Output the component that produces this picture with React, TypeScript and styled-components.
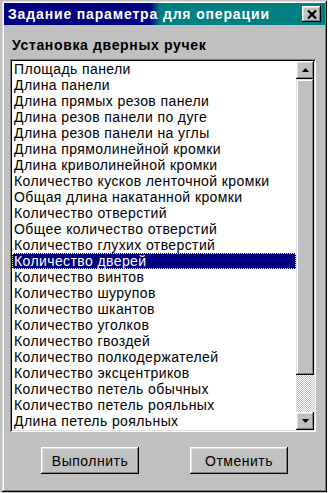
import React from 'react';
import styled, {createGlobalStyle} from 'styled-components';

const items = [
  'Площадь панели',
  'Длина панели',
  'Длина прямых резов панели',
  'Длина резов панели по дуге',
  'Длина резов панели на углы',
  'Длина прямолинейной кромки',
  'Длина криволинейной кромки',
  'Количество кусков ленточной кромки',
  'Общая длина накатанной кромки',
  'Количество отверстий',
  'Общее количество отверстий',
  'Количество глухих отверстий',
  'Количество дверей',
  'Количество винтов',
  'Количество шурупов',
  'Количество шкантов',
  'Количество уголков',
  'Количество гвоздей',
  'Количество полкодержателей',
  'Количество эксцентриков',
  'Количество петель обычных',
  'Количество петель рояльных',
  'Длина петель рояльных',
];

const SELECTED = 12;

const GlobalStyle = createGlobalStyle`
  html, body {
    margin: 0;
    padding: 0;
  }
  body {
    background: linear-gradient(to right, #c0c0c0 327px, #ffffff 327px);
    font-family: "Liberation Sans", Arial, sans-serif;
  }
`;

const Desktop = styled.div`
  padding: 1px 0 0 2px;
  height: 493px;
  box-sizing: border-box;
`;

const Window = styled.div`
  width: 325px;
  height: 491px;
  box-sizing: border-box;
  padding: 2px;
  background: #c0c0c0;
  box-shadow: inset -1px -1px #000000, inset 1px 1px #dfdfdf,
    inset -2px -2px #808080, inset 2px 2px #ffffff;
  display: flex;
  flex-direction: column;
`;

const TitleBar = styled.div`
  height: 22px;
  display: flex;
  align-items: center;
  padding: 0 4px 0 4px;
  background: linear-gradient(to right, #000080 0, #000080 146px, #008080 156px, #008080 100%);
  color: #ffffff;
  font-weight: bold;
  font-size: 14px;
  letter-spacing: 0.85px;
`;

const TitleText = styled.span`
  flex: 1;
  white-space: nowrap;
`;

const RaisedButton = styled.button`
  font-family: "Liberation Sans", Arial, sans-serif;
  background: #c0c0c0;
  border: none;
  padding: 0;
  margin: 0;
  color: #000000;
  box-shadow: inset -1px -1px #000000, inset 1px 1px #ffffff,
    inset -2px -2px #808080, inset 2px 2px #dfdfdf;
  display: flex;
  align-items: center;
  justify-content: center;
`;

const CloseButton = styled(RaisedButton)`
  width: 19px;
  height: 16px;
`;

const Body = styled.div`
  flex: 1;
  display: flex;
  flex-direction: column;
`;

const GroupLabel = styled.div`
  margin: 12px 0 0 8px;
  line-height: 16px;
  font-size: 14px;
  font-weight: bold;
  letter-spacing: 0.65px;
  color: #000000;
`;

const ListBox = styled.div`
  margin: 6px 0 0 6px;
  width: 306px;
  height: 373px;
  box-sizing: border-box;
  padding: 2px;
  background: #ffffff;
  box-shadow: inset 1px 1px #808080, inset -1px -1px #ffffff,
    inset 2px 2px #000000, inset -2px -2px #dfdfdf;
  display: flex;
`;

const Rows = styled.div`
  flex: 1;
  overflow: hidden;
`;

const Row = styled.div<{$selected?: boolean}>`
  height: 16px;
  line-height: 16px;
  padding-left: 2px;
  font-size: 14px;
  letter-spacing: 0.4px;
  white-space: nowrap;
  color: ${p => (p.$selected ? '#ffffff' : '#000000')};
  background: ${p => (p.$selected ? '#000080' : 'transparent')};
  outline: ${p => (p.$selected ? '1px dotted #ffff80' : 'none')};
  outline-offset: -1px;
`;

const ScrollBar = styled.div`
  width: 18px;
  display: flex;
  flex-direction: column;
`;

const ArrowButton = styled(RaisedButton)`
  width: 18px;
  height: 18px;
  flex: none;
`;

const Track = styled.div`
  flex: 1;
  display: flex;
  flex-direction: column;
  background-image: conic-gradient(#ffffff 25%, #c0c0c0 0 50%, #ffffff 0 75%, #c0c0c0 0);
  background-size: 2px 2px;
`;

const Thumb = styled.div`
  height: 296px;
  background: #c0c0c0;
  box-shadow: inset -1px -1px #000000, inset 1px 1px #dfdfdf,
    inset -2px -2px #808080, inset 2px 2px #ffffff;
`;

const Footer = styled.div`
  display: flex;
  justify-content: center;
  gap: 51px;
  padding-top: 15px;
`;

const ActionButton = styled(RaisedButton)`
  width: 98px;
  height: 27px;
  font-size: 14px;
  letter-spacing: 0.5px;
`;

function Arrow({down}: {down?: boolean}) {
  return (
    <svg width="7" height="4" viewBox="0 0 7 4">
      <path d={down ? 'M0 0H7L3.5 4Z' : 'M3.5 0L7 4H0Z'} fill="#000000" />
    </svg>
  );
}

function App() {
  return (
    <Desktop>
      <GlobalStyle />
      <Window>
        <TitleBar>
          <TitleText>Задание параметра для операции</TitleText>
          <CloseButton>
            <svg width="10" height="9" viewBox="0 0 10 9">
              <path d="M1 0.5L9 8.5M9 0.5L1 8.5" stroke="#000000" strokeWidth="2.2" />
            </svg>
          </CloseButton>
        </TitleBar>
        <Body>
          <GroupLabel>Установка дверных ручек</GroupLabel>
          <ListBox>
            <Rows>
              {items.map((item, i) => (
                <Row key={item} $selected={i === SELECTED}>
                  {item}
                </Row>
              ))}
            </Rows>
            <ScrollBar>
              <ArrowButton>
                <Arrow />
              </ArrowButton>
              <Track>
                <Thumb />
              </Track>
              <ArrowButton>
                <Arrow down />
              </ArrowButton>
            </ScrollBar>
          </ListBox>
          <Footer>
            <ActionButton>Выполнить</ActionButton>
            <ActionButton>Отменить</ActionButton>
          </Footer>
        </Body>
      </Window>
    </Desktop>
  );
}

export default App;
